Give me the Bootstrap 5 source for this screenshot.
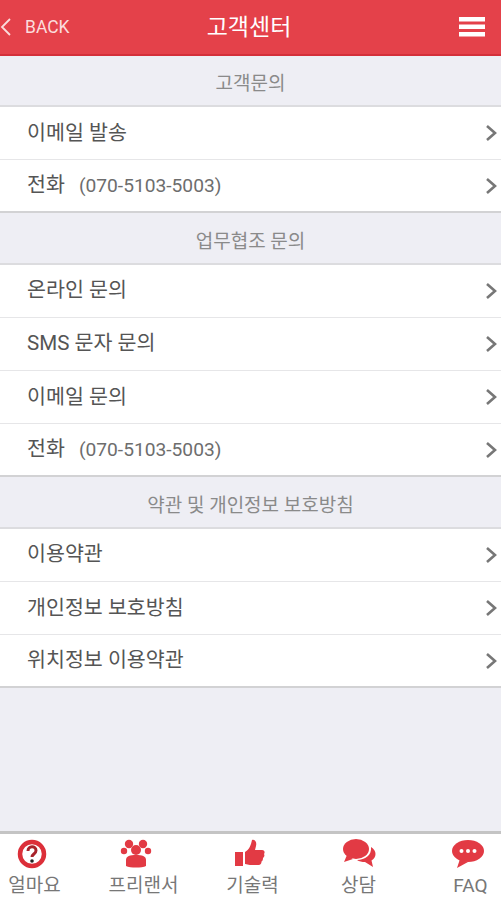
<!doctype html>
<html lang="ko">
<head>
    <meta charset="UTF-8" />
    <meta name="viewport" content="width=device-width, initial-scale=1" />
    <title>고객센터</title>
    <link href="https://cdn.jsdelivr.net/npm/bootstrap@5.3.3/dist/css/bootstrap.min.css" rel="stylesheet">
    <style>
        html, body { height: 100%; }
        body {
            background: #eeeef4;
            font-family: Roboto, "Noto Sans CJK KR", sans-serif;
            color: #555;
            overflow: hidden;
        }
        .app-shell { height: 900px; }
        .top-bar {
            height: 55.5px;
            background: #e4414a;
            border-bottom: 2px solid #d42f3a;
            color: #fff;
        }
        .back-link { color: #fbdcdc; font-size: 17.5px; text-decoration: none; width: 110px; }
        .back-link svg { margin-right: 13px; }
        .top-title { font-size: 23px; font-weight: 400; padding-top: 3px; padding-right: 3px; }
        .burger { width: 110px; padding-right: 16px; }
        .section-head {
            height: 51.4px;
            padding-top: 8px;
            font-size: 19px;
            color: #8a8a8a;
            border-bottom: 2px solid #dcdcdf;
        }
        .menu-group .list-group-item {
            height: 53.2px;
            padding: 0 2px 0 27px;
            border-color: #e6e6e8;
            color: #555;
            font-size: 20.6px;
        }
        .menu-group .list-group-item:last-child { border-bottom: 2px solid #d2d2d4; }
        .phone-no { color: #6d6d6d; font-size: 19.2px; margin-left: 14px; }
        .bottom-bar {
            height: 69px;
            background: #fff;
            border-top: 3px solid #c4c4c4;
            margin-left: -20px;
            width: 545px;
        }
        .tab-item { font-size: 19px; color: #777; line-height: 1; width: 109px; flex-shrink: 0; }
        .tab-item svg { display: block; margin-bottom: 6px; }
        .tab-item.nudge-sm svg { margin-right: 6px; }
        .tab-item.nudge-lg svg { margin-right: 16px; }
        .tab-item.tab-back { margin-left: -3px; margin-right: 3px; }
    </style>
</head>
<body>
    <div class="app-shell d-flex flex-column">
        <div class="top-bar d-flex align-items-center justify-content-between flex-shrink-0">
            <a class="back-link d-flex align-items-center" href="#">
                <svg width="12" height="20" viewBox="0 0 12 20"><path d="M10 2 2 10l8 8" fill="none" stroke="#fbdcdc" stroke-width="1.8"/></svg>BACK
            </a>
            <div class="top-title">고객센터</div>
            <div class="burger d-flex justify-content-end">
                <svg width="26" height="22" viewBox="0 0 26 22"><path d="M0 1h26v4.500H0zM0 8.500h26V13H0zM0 16h26v4.500H0z" fill="#fff"/></svg>
            </div>
        </div>

        <div class="section-head d-flex align-items-center justify-content-center flex-shrink-0">고객문의</div>
        <div class="list-group list-group-flush menu-group" id="group1"></div>

        <div class="section-head d-flex align-items-center justify-content-center flex-shrink-0">업무협조 문의</div>
        <div class="list-group list-group-flush menu-group" id="group2"></div>

        <div class="section-head d-flex align-items-center justify-content-center flex-shrink-0">약관 및 개인정보 보호방침</div>
        <div class="list-group list-group-flush menu-group" id="group3"></div>

        <div class="flex-grow-1"></div>

        <div class="bottom-bar d-flex align-items-start pt-1 flex-shrink-0">
            <div class="tab-item nudge-sm d-flex flex-column align-items-center">
                <svg width="32" height="32" viewBox="0 0 32 32">
                    <circle cx="16" cy="16" r="12" fill="#fff" stroke="#dc2f39" stroke-width="4.500"/>
                    <path d="M12 13c0-5.500 8-5.500 8-.5 0 3.500-4 3.500-4 6.500" fill="none" stroke="#a8232b" stroke-width="3"/>
                    <circle cx="16" cy="23" r="1.800" fill="#222"/>
                </svg>
                얼마요
            </div>
            <div class="tab-item nudge-lg d-flex flex-column align-items-center">
                <svg width="32" height="32" viewBox="0 0 32 32" fill="#e23a44">
                    <circle cx="9" cy="6" r="4.200"/><circle cx="23" cy="6" r="4.200"/>
                    <circle cx="4" cy="13" r="3.200"/><circle cx="28" cy="13" r="3.200"/>
                    <circle cx="16" cy="12" r="5"/>
                    <path d="M6 28v-6c0-4 4-5 10-5s10 1 10 5v6c-4 2-16 2-20 0z"/>
                </svg>
                프리랜서
            </div>
            <div class="tab-item nudge-sm d-flex flex-column align-items-center">
                <svg width="32" height="32" viewBox="0 0 32 32" fill="#e23a44">
                    <path d="M1 14h8v14H1z"/>
                    <path d="M11 14c4-2 6-7 7-12 3-1 5 2 4 6l-1 4h7c3 0 3 3 2 4 1 2 0 3-1 4 0 2-.500 3-1.500 3.500 0 2-1 3.500-3 3.500H16c-2 0-3-1-5-1z"/>
                </svg>
                기술력
            </div>
            <div class="tab-item tab-back d-flex flex-column align-items-center">
                <svg width="34" height="32" viewBox="0 0 34 32" fill="#e23a44">
                    <ellipse cx="14" cy="11" rx="13" ry="10"/>
                    <path d="M5 17 2 24l9-3z"/>
                    <path d="M29 9c3 2 4.500 4 4.500 7 0 3-1.500 5-4 6.500L31 29l-8-5c-3 0-6-.500-8-2 8 0 15-5 14-13z"/>
                </svg>
                상담
            </div>
            <div class="tab-item nudge-sm d-flex flex-column align-items-center">
                <svg width="34" height="32" viewBox="0 0 34 32">
                    <ellipse cx="17" cy="13" rx="16" ry="11" fill="#e23a44"/>
                    <path d="M9 21 6 30l11-6z" fill="#e23a44"/>
                    <circle cx="10.500" cy="13" r="2" fill="#fff"/><circle cx="17" cy="13" r="2" fill="#fff"/><circle cx="23.500" cy="13" r="2" fill="#fff"/>
                </svg>
                FAQ
            </div>
        </div>
    </div>

    <script>
        const groups = {
            group1: [["이메일 발송"], ["전화", "(070-5103-5003)"]],
            group2: [["온라인 문의"], ["SMS 문자 문의"], ["이메일 문의"], ["전화", "(070-5103-5003)"]],
            group3: [["이용약관"], ["개인정보 보호방침"], ["위치정보 이용약관"]]
        };
        const chevron = '<svg width="14" height="18" viewBox="0 0 14 18"><path d="M2 2l8 7-8 7" fill="none" stroke="#777" stroke-width="2.600"/></svg>';

        Object.keys(groups).forEach(id => {
            const el = document.getElementById(id);
            groups[id].forEach(row => {
                const item = document.createElement("div");
                item.className = "list-group-item d-flex align-items-center justify-content-between";
                const phone = row[1] ? `<span class="phone-no">${row[1]}</span>` : "";
                item.innerHTML = `<span>${row[0]}${phone}</span>${chevron}`;
                el.appendChild(item);
            });
        });
    </script>
    <script src="https://cdn.jsdelivr.net/npm/bootstrap@5.3.3/dist/js/bootstrap.bundle.min.js"></script>
</body>
</html>
